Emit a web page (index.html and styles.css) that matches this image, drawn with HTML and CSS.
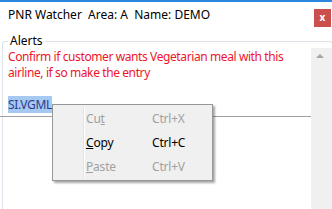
FILE: index.html
```
<!DOCTYPE html>
<html lang="en">
<head>
  <meta charset="UTF-8" />
  <title>PNR Watcher</title>
  <link rel="stylesheet" href="styles.css">
</head>
<body>
  <div class="window">
    <div class="titlebar">
      <span class="title">PNR Watcher&nbsp; Area: A&nbsp; Name: DEMO</span>
      <span class="close">x</span>
    </div>

    <fieldset class="alerts">
      <legend>Alerts</legend>
      <div class="alerts-body">
        <div class="editor">
          <div class="message">Confirm if customer wants Vegetarian meal with this<br>airline, if so make the entry</div>
          <div class="blank">&nbsp;</div>
          <div class="entry"><span class="selected">SI.VGML</span></div>
        </div>
        <div class="scrollbar">
          <span class="arrow-up"></span>
        </div>
      </div>
    </fieldset>

    <div class="menu">
      <div class="gutter"></div>
      <div class="menu-item disabled"><span class="label">Cu<u>t</u></span><span class="keys">Ctrl+X</span></div>
      <div class="menu-item"><span class="label"><u>C</u>opy</span><span class="keys">Ctrl+C</span></div>
      <div class="menu-item disabled"><span class="label"><u>P</u>aste</span><span class="keys">Ctrl+V</span></div>
    </div>
  </div>
</body>
</html>
```

FILE: styles.css
```
body {
  margin: 0;
  width: 332px;
  height: 209px;
  overflow: hidden;
  background: #ffffff;
  font-family: "Noto Sans", "Open Sans", sans-serif;
  font-size: 12px;
  line-height: 16px;
  color: #000000;
}

.window {
  position: relative;
  height: 209px;
  border-top: 2px solid #2b88dc;
  box-sizing: border-box;
  overflow: hidden;
}

.titlebar {
  display: flex;
  justify-content: space-between;
  align-items: flex-start;
  padding: 5px 1px 0 8px;
  height: 26px;
}

.close {
  width: 17px;
  height: 18px;
  margin-top: 2px;
  background: #c9504d;
  color: #ffffff;
  font-size: 10px;
  font-weight: bold;
  line-height: 17px;
  text-align: center;
}

.alerts {
  margin: 0 -1px 0 2px;
  padding: 0 0 0 5px;
  border: 1px solid #dde3e8;
  border-bottom: none;
  border-radius: 3px 3px 0 0;
}

.alerts legend {
  padding: 0 2px;
  line-height: 16px;
}

.alerts-body {
  display: flex;
  height: 160px;
}

.editor {
  flex: 1;
}

.message {
  color: #f0142a;
  letter-spacing: -0.4px;
}

.entry {
  margin-left: -8px;
  padding-left: 8px;
  height: 19px;
  border-bottom: 1px solid #a0a0a0;
}

.selected {
  background: #a6c9f2;
  color: #2e3a8c;
  letter-spacing: -0.3px;
}

.scrollbar {
  width: 21px;
  margin-top: -1px;
  background: #f0f0f0;
  display: flex;
  justify-content: center;
}

.arrow-up {
  width: 0;
  height: 0;
  margin-top: 6px;
  margin-right: 4px;
  border-left: 4px solid transparent;
  border-right: 4px solid transparent;
  border-bottom: 4px solid #a3a3a3;
}

.menu {
  position: absolute;
  left: 52px;
  top: 102px;
  width: 159px;
  padding: 2px 0 1px;
  background: #f0f0f0;
  border: 1px solid #979797;
  box-shadow: 2px 2px 2px rgba(0, 0, 0, 0.35);
}

.gutter {
  position: absolute;
  left: 30px;
  top: 2px;
  bottom: 2px;
  width: 1px;
  background: #e2e3e3;
  border-right: 1px solid #ffffff;
}

.menu-item {
  display: flex;
  height: 24px;
  line-height: 24px;
  padding-left: 33px;
  letter-spacing: -0.2px;
}

.menu-item .label {
  width: 66px;
}

.menu-item.disabled {
  color: #a0a0a0;
}
```
